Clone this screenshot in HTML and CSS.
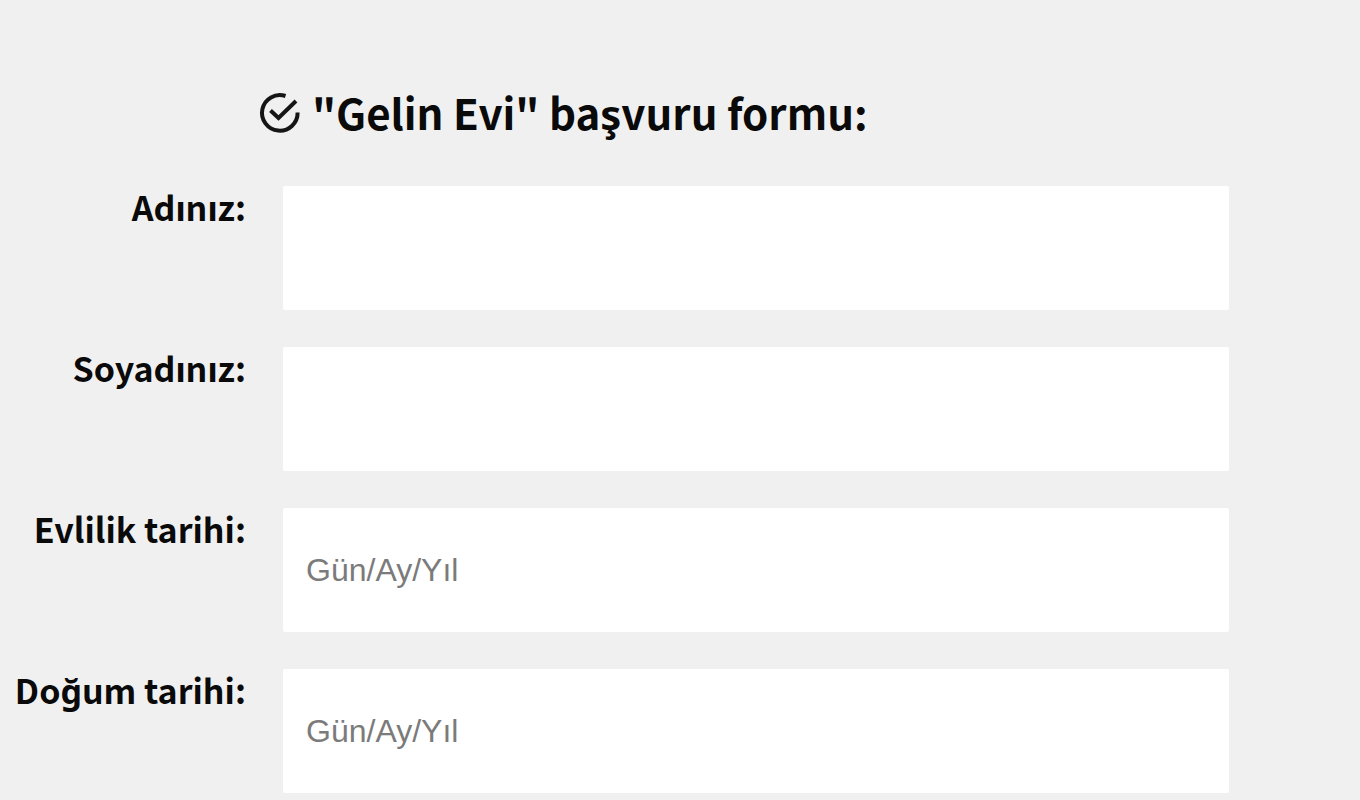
FILE: index.html
```html
<!DOCTYPE html>
<html lang="tr">
<head>
<meta charset="utf-8">
<meta name="viewport" content="width=device-width, initial-scale=1">
<title>"Gelin Evi" başvuru formu</title>
<link rel="stylesheet" href="styles.css">
</head>
<body>
<main class="page">
  <h1 class="title">
    <svg class="title-icon" viewBox="0 0 40 40" aria-hidden="true">
      <path d="M25.5 4A17.8 17.8 0 1 0 37.6 20.5"/>
      <path d="M10.5 18.5L18.5 26L36 9"/>
    </svg>
    <span>"Gelin Evi" başvuru formu:</span>
  </h1>
  <form class="form">
    <div class="row">
      <label class="label" for="first-name">Adınız:</label>
      <input class="field" id="first-name" type="text">
    </div>
    <div class="row">
      <label class="label" for="last-name">Soyadınız:</label>
      <input class="field" id="last-name" type="text">
    </div>
    <div class="row">
      <label class="label" for="wedding-date">Evlilik tarihi:</label>
      <input class="field" id="wedding-date" type="text" placeholder="Gün/Ay/Yıl">
    </div>
    <div class="row">
      <label class="label" for="birth-date">Doğum tarihi:</label>
      <input class="field" id="birth-date" type="text" placeholder="Gün/Ay/Yıl">
    </div>
  </form>
</main>
</body>
</html>
```
FILE: styles.css
```css
* {
  box-sizing: border-box;
}

body {
  margin: 0;
  background: #f0f0f0;
  color: #0a0a0a;
  font-family: "Noto Sans CJK JP", "Noto Sans", sans-serif;
}

.page {
  padding: 82px 131px 7px 0;
}

.title {
  display: flex;
  align-items: center;
  gap: 12px;
  margin: 0 0 44px 260px;
  font-size: 42px;
  line-height: 60px;
  font-weight: 700;
}

.title-icon {
  flex: none;
  width: 40px;
  height: 40px;
  overflow: visible;
  fill: none;
  stroke: #151515;
  stroke-width: 4;
}

.form {
  display: grid;
  gap: 37px;
}

.row {
  display: grid;
  grid-template-columns: 246px 1fr;
  column-gap: 37px;
}

.label {
  font-size: 34px;
  line-height: 42px;
  font-weight: 700;
  text-align: right;
  white-space: nowrap;
}

.field {
  width: 100%;
  height: 124px;
  padding: 0 23px;
  border: 0;
  border-radius: 2px;
  background: #fff;
  color: #0a0a0a;
  font-family: "Liberation Sans", Arial, sans-serif;
  font-size: 32px;
}

.field::placeholder {
  color: #7b7b7b;
  opacity: 1;
}
```
